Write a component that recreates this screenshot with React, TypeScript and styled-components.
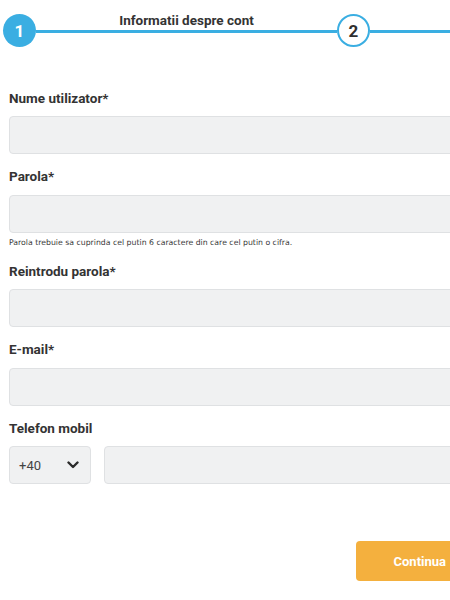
import styled, { createGlobalStyle } from "styled-components";

const GlobalStyle = createGlobalStyle`
    html, body {
        margin: 0;
        padding: 0;
        background: #ffffff;
        overflow: hidden;
    }
    body {
        font-family: Roboto, "Liberation Sans", Arial, sans-serif;
        color: #333333;
    }
    * {
        box-sizing: border-box;
    }
`;

const BLUE = "#3aaee2";

const Stepper = styled.div`
    display: flex;
    align-items: flex-start;
    padding: 12px 0 0 3px;
`;

//active step is filled, the next one is only an outline
const StepCircle = styled.div<{ $active?: boolean }>`
    flex: none;
    width: 33px;
    height: 33px;
    margin-top: 2px;
    border-radius: 50%;
    display: flex;
    align-items: center;
    justify-content: center;
    font-size: 17px;
    font-weight: 700;
    background: ${(p) => (p.$active ? BLUE : "#ffffff")};
    color: ${(p) => (p.$active ? "#ffffff" : "#2f2f2f")};
    border: ${(p) => (p.$active ? "none" : `2.5px solid ${BLUE}`)};
`;

const Segment = styled.div`
    flex: none;
    width: 301px;
    display: flex;
    flex-direction: column;
    align-items: center;
`;

const SegmentLabel = styled.div`
    height: 16px;
    line-height: 16px;
    font-size: 13.5px;
    font-weight: 700;
    color: #333333;
    white-space: nowrap;
`;

const SegmentLine = styled.div`
    align-self: stretch;
    height: 3px;
    margin-top: 1.5px;
    background: ${BLUE};
`;

const Form = styled.form`
    display: flex;
    flex-direction: column;
    width: 475px;
    margin: 42.5px 0 0 9px;
`;

const Field = styled.div`
    display: flex;
    flex-direction: column;
    margin-bottom: 14px;
`;

const Label = styled.label`
    height: 16px;
    line-height: 16px;
    font-size: 13.5px;
    font-weight: 700;
    color: #333333;
    margin-bottom: 10.5px;
`;

const Input = styled.input`
    height: 38px;
    width: 100%;
    background: #f0f1f2;
    border: 1px solid #dfe1e3;
    border-radius: 4px;
    padding: 0 10px;
    font-size: 13px;
    font-family: Roboto, "Liberation Sans", sans-serif;
    &:focus {
        outline: none;
    }
`;

const Hint = styled.div`
    margin-top: 4px;
    height: 12px;
    line-height: 12px;
    font-family: "DejaVu Sans", Verdana, sans-serif;
    font-size: 7.75px;
    color: #3a3a3a;
`;

const PhoneRow = styled.div`
    display: flex;
    gap: 13px;
`;

const PrefixSelect = styled.div`
    flex: none;
    width: 82px;
    height: 38px;
    background: #f0f1f2;
    border: 1px solid #dfe1e3;
    border-radius: 4px;
    display: flex;
    align-items: center;
    justify-content: space-between;
    padding: 0 11px 0 9px;
    font-size: 13px;
    color: #444444;
`;

const Footer = styled.div`
    display: flex;
    justify-content: flex-end;
    margin-top: 43px;
`;

const SubmitBtn = styled.button`
    height: 40px;
    padding: 0 38px;
    border: none;
    border-radius: 4px;
    background: #f4b03e;
    color: #ffffff;
    font-family: Roboto, "Liberation Sans", sans-serif;
    font-size: 13px;
    font-weight: 700;
    cursor: pointer;
`;

function Chevron() {
    return (
        <svg width="12" height="8" viewBox="0 0 12 8">
            <path d="M1.5 1.5 L6 6 L10.5 1.5" fill="none" stroke="#2b2b2b" strokeWidth="2.4" strokeLinecap="round" strokeLinejoin="round" />
        </svg>
    );
}

export default function App() {
    return (
        <>
            <GlobalStyle />
            <Stepper>
                <StepCircle $active>1</StepCircle>
                <Segment>
                    <SegmentLabel>Informatii despre cont</SegmentLabel>
                    <SegmentLine />
                </Segment>
                <StepCircle>2</StepCircle>
                <Segment>
                    <SegmentLabel />
                    <SegmentLine />
                </Segment>
            </Stepper>
            <Form onSubmit={(e) => e.preventDefault()}>
                <Field>
                    <Label>Nume utilizator*</Label>
                    <Input type="text" />
                </Field>
                <Field>
                    <Label>Parola*</Label>
                    <Input type="password" />
                    <Hint>Parola trebuie sa cuprinda cel putin 6 caractere din care cel putin o cifra.</Hint>
                </Field>
                <Field>
                    <Label>Reintrodu parola*</Label>
                    <Input type="password" />
                </Field>
                <Field>
                    <Label>E-mail*</Label>
                    <Input type="email" />
                </Field>
                <Field>
                    <Label>Telefon mobil</Label>
                    <PhoneRow>
                        <PrefixSelect>
                            <span>+40</span>
                            <Chevron />
                        </PrefixSelect>
                        <Input type="tel" />
                    </PhoneRow>
                </Field>
                <Footer>
                    <SubmitBtn type="submit">Continua</SubmitBtn>
                </Footer>
            </Form>
        </>
    );
}
